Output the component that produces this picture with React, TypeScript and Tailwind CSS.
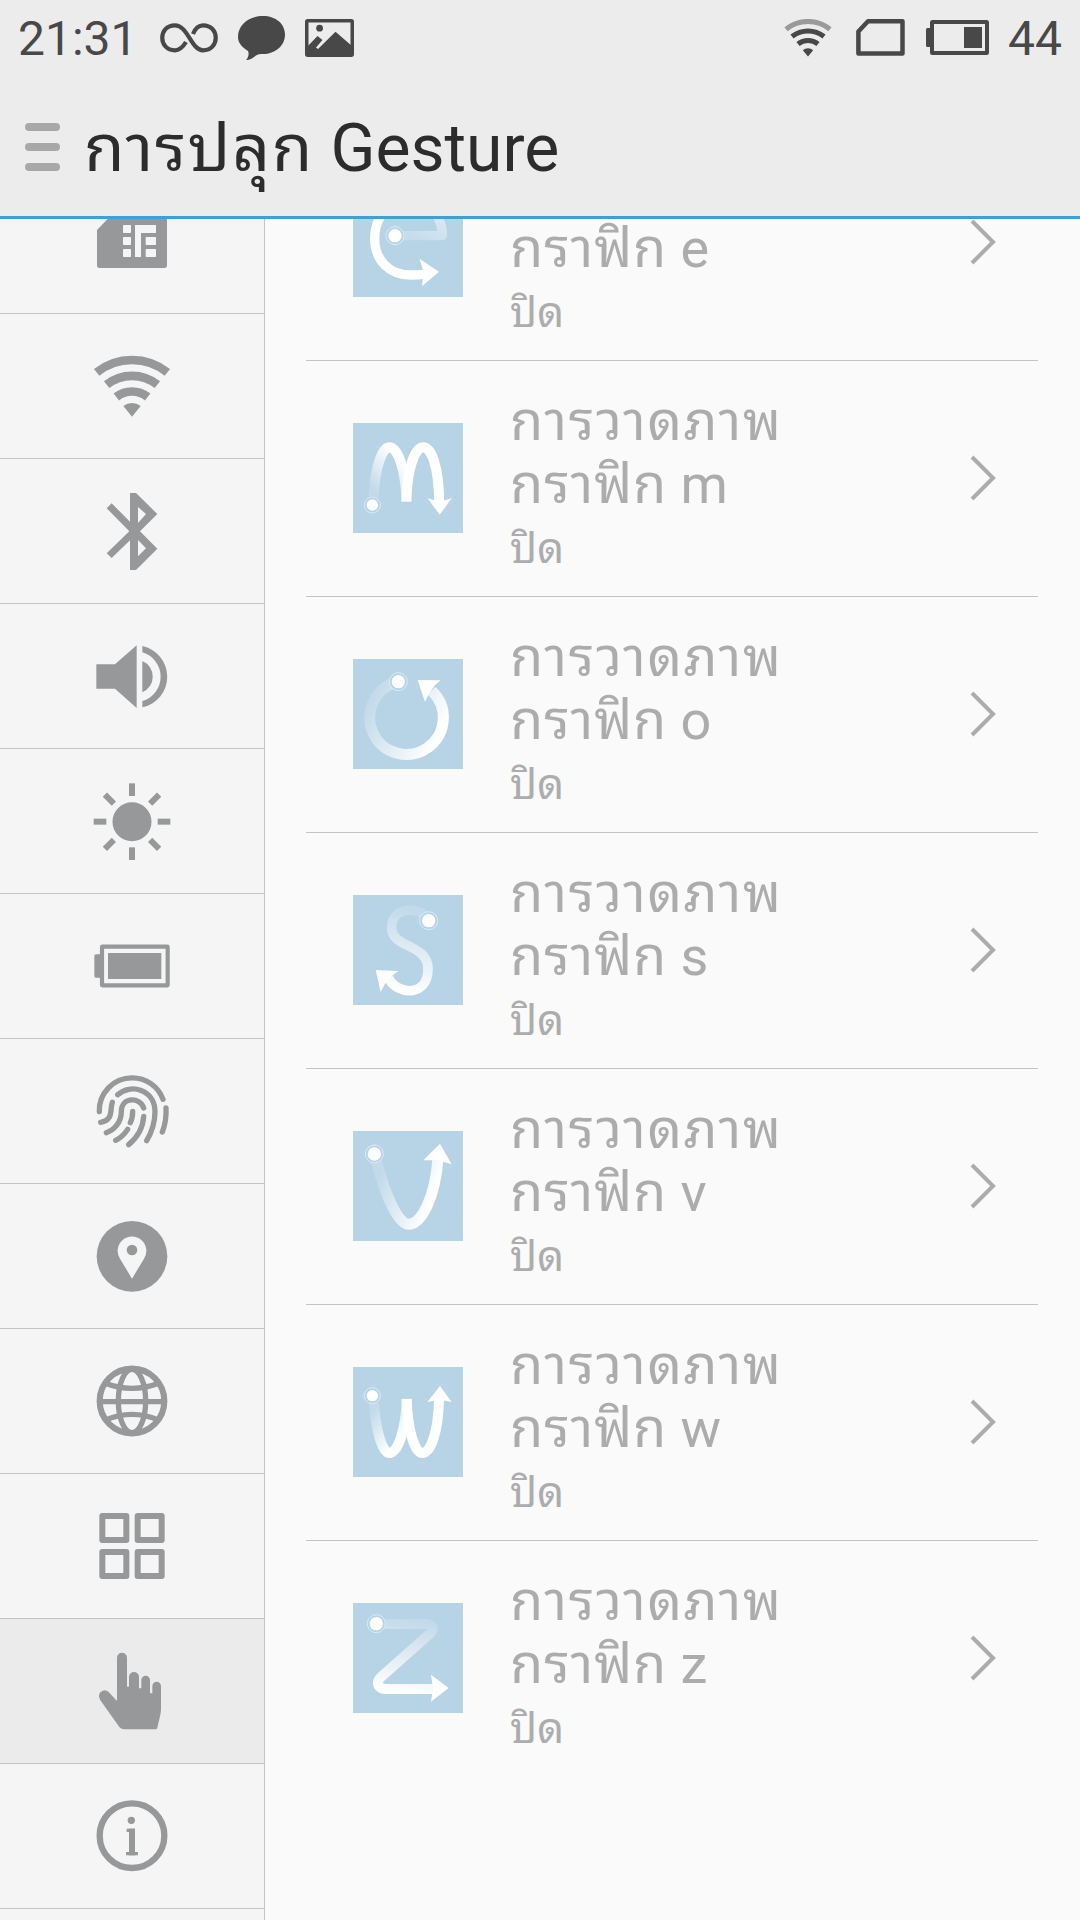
import type { ReactNode } from "react";

const fontClass = "font-['Roboto','Noto_Sans_Thai_Looped','Droid_Sans_Thai','Loma','Noto_Sans',sans-serif]";

/* Status bar icons */

function InfinityIcon() {
  return (
    <svg width="58" height="30" viewBox="0 0 58 30" fill="none" stroke="#484848" strokeWidth="4.2">
      <path d="M26 19C23 24 20 27.3 15 27.3C-2 27.3 -2 2.3 15 2.3C28 2.3 31 27.3 43 27.3C60 27.3 60 2.3 43 2.3C38 2.3 35 6 33 11" />
    </svg>
  );
}

function BubbleIcon() {
  return (
    <svg width="47" height="44" viewBox="0 0 47 44" fill="#484848">
      <path d="M25 0C38 0 47 8 47 18.5C47 30 37 38 25 38C22 38 20 38.2 18 39.5C15 42 12 44 8 44C11 41 11 37 10 35C4 31 0 27 0 21C0 9 11 0 25 0Z" />
    </svg>
  );
}

function PictureIcon() {
  return (
    <svg width="49" height="38" viewBox="0 0 49 38">
      <rect x="1.75" y="1.75" width="45.5" height="34.5" rx="1" fill="none" stroke="#484848" strokeWidth="3.5" />
      <circle cx="14.6" cy="9.2" r="3.4" fill="#484848" />
      <path d="M2 28L12.5 17L17.5 21L11 28.5L13 30L30.5 12.7L47 27V36H2Z" fill="#484848" />
    </svg>
  );
}

function StatusWifi() {
  return (
    <svg width="48" height="38" viewBox="0 0 48 38" fill="none" stroke="#484848" strokeWidth="5">
      <path d="M2 10.2A35 35 0 0 1 46 10.2" stroke="#9a9a9a" />
      <path d="M8 17.5A25.7 25.7 0 0 1 40 17.5" />
      <path d="M14 25A16 16 0 0 1 34 25" />
      <path d="M24 37.5L18.8 31.2A8 8 0 0 1 29.2 31.2Z" fill="#484848" stroke="none" />
    </svg>
  );
}

function StatusSim() {
  return (
    <svg width="49" height="37" viewBox="0 0 49 37" fill="none" stroke="#484848" strokeWidth="4.5" strokeLinejoin="round">
      <path d="M12 2.3H46.5V34.5H2.4V12.5Z" />
    </svg>
  );
}

function StatusBattery() {
  return (
    <svg width="63" height="35" viewBox="0 0 63 35" fill="#484848">
      <rect y="8" width="6" height="19" rx="1.5" />
      <rect x="6" y="2" width="55" height="31" rx="0.5" fill="none" stroke="#484848" strokeWidth="4" />
      <rect x="38" y="7" width="18" height="21" />
    </svg>
  );
}

/* Sidebar icons, all on a 240 grid */

function SideIcon({ children }: { children: ReactNode }) {
  return (
    <svg width="80" height="80" viewBox="0 0 240 240" fill="#979899">
      {children}
    </svg>
  );
}

const simIcon = (
  <>
    <path d="M15 87L67 33H217Q225 33 225 41V193Q225 201 217 201H23Q15 201 15 193Z" />
    <g fill="#f5f5f5">
      <rect x="93" y="72" width="24" height="24" rx="2" />
      <rect x="93" y="108" width="24" height="24" rx="2" />
      <rect x="93" y="144" width="24" height="24" rx="2" />
      <path d="M129 72H192V96H147V168H129Z" />
      <rect x="161" y="108" width="31" height="24" rx="2" />
      <rect x="161" y="144" width="31" height="24" rx="2" />
    </g>
  </>
);

const wifiIcon = (
  <>
    <g fill="none" stroke="#979899" strokeWidth="26">
      <path d="M14 79A170 170 0 0 1 226 79" />
      <path d="M44 116A122.5 122.5 0 0 1 196 116" />
      <path d="M73 153A75.5 75.5 0 0 1 167 153" />
    </g>
    <path d="M120 212L94 180A42 42 0 0 1 146 180Z" />
  </>
);

const bluetoothIcon = (
  <path
    fillRule="evenodd"
    d="M114 6H132L196 69L144 121L196 173L132 237H114V148L59 201L44 187L112 121L44 52L59 37L114 92ZM138 48L162 69L138 96ZM138 147L162 172L138 196Z"
  />
);

const volumeIcon = (
  <>
    <path d="M13 85H69L134 28V216L69 158H13Z" />
    <path d="M151 75A51 51 0 0 1 151 169Z" />
    <path d="M151 30A94 94 0 0 1 151 214V195A76 76 0 0 0 151 49Z" />
  </>
);

const rays = [0, 45, 90, 135, 180, 225, 270, 315];
const sunIcon = (
  <>
    <circle cx="120" cy="122" r="58.5" />
    {rays.map((deg) => (
      <rect key={deg} x="111" y="7" width="18" height="38" transform={`rotate(${deg} 120 122)`} />
    ))}
  </>
);

const batteryIcon = (
  <>
    <rect x="7" y="85" width="22" height="70" rx="5" />
    <rect x="30" y="62" width="197" height="116" rx="1" fill="none" stroke="#979899" strokeWidth="12.5" />
    <rect x="48" y="81" width="160" height="78" />
  </>
);

const fingerprintIcon = (
  <g fill="none" stroke="#979899" strokeWidth="16" strokeLinecap="round">
    <path d="M22 122A98 98 0 0 1 120 20.5A98 98 0 0 1 213 85" />
    <path d="M222 111Q224 150 211 183" />
    <path d="M77 71C115 36 189 55 189 122C189 160 178 185 164 209" />
    <path d="M155 111C145 78 88 76 88 122C88 155 65 178 43 185" />
    <path d="M122 121Q122 142 115 155" />
    <path d="M61 94C53 116 66 146 26 154" />
    <path d="M155 136C153 170 135 200 110 221" />
    <path d="M107 175Q92 198 71 208" />
  </g>
);

const locationIcon = (
  <>
    <circle cx="120" cy="121" r="106" />
    <path d="M120 188L84 128A43 43 0 1 1 156 128Z" fill="#f5f5f5" />
    <circle cx="120" cy="102" r="16" />
  </>
);

const globeIcon = (
  <g fill="none" stroke="#979899" strokeWidth="16">
    <circle cx="120" cy="120" r="97" strokeWidth="18.5" />
    <ellipse cx="120" cy="120" rx="41" ry="95" />
    <path d="M23 122H217" />
    <path d="M38 66Q120 98 202 66" />
    <path d="M38 178Q120 142 202 178" />
  </g>
);

const gridIcon = (
  <g fill="none" stroke="#979899" strokeWidth="18" strokeLinejoin="round">
    <rect x="31" y="30" width="72" height="72" />
    <rect x="137" y="30" width="72" height="72" />
    <rect x="31" y="138" width="72" height="72" />
    <rect x="137" y="138" width="72" height="72" />
  </g>
);

const handIcon = (
  <path d="M75 20a15 15 0 0 1 30 0V107H111V78a15 15 0 0 1 30 0V112H148V87a13 13 0 0 1 26 0V127H181V105a13 13 0 0 1 26 0V177Q206 190 203 200L196 230Q195 235 190 235H97Q88 235 82 228L24 146Q17 132 26 123Q38 113 50 123L75 150Z" />
);

const infoIcon = (
  <g fill="none" stroke="#979899">
    <circle cx="120" cy="119" r="97" strokeWidth="19" />
    <circle cx="118" cy="73" r="11" fill="#979899" stroke="none" />
    <path d="M120 98V178" strokeWidth="18" />
    <path d="M104 103H129M102 173H138" strokeWidth="10" />
  </g>
);

const sideItems = [
  { id: "sim", icon: simIcon },
  { id: "wifi", icon: wifiIcon },
  { id: "bluetooth", icon: bluetoothIcon },
  { id: "sound", icon: volumeIcon },
  { id: "display", icon: sunIcon },
  { id: "battery", icon: batteryIcon },
  { id: "fingerprint", icon: fingerprintIcon },
  { id: "location", icon: locationIcon },
  { id: "language", icon: globeIcon },
  { id: "apps", icon: gridIcon },
  { id: "gesture", icon: handIcon, active: true },
  { id: "about", icon: infoIcon },
];

/* Gesture tiles, 330 grid. Each stroke fades in from the start dot to the arrow. */

type Gesture = {
  letter: string;
  dot: [number, number, number];
  fade: [number, number, number, number];
  faded: string;
  solid?: string;
  width: number;
  arrow: string;
  scrolled?: boolean;
};

const gestures: Gesture[] = [
  {
    letter: "e",
    dot: [126, 146, 20],
    fade: [130, 146, 268, -100],
    faded: "M126 146H268V135C262 80 225 45 168 45",
    solid: "M168 45C95 45 65 100 65 155C65 220 110 264 172 264Q195 264 216 262",
    width: 28,
    arrow: "M200 216L258 254L207 298L212 257Z",
    scrolled: true,
  },
  {
    letter: "m",
    dot: [58, 246, 17],
    fade: [60, 200, 150, 120],
    faded: "M62 222C66 130 88 73 109 73C132 73 158 130 160 236",
    solid: "M160 236C162 130 188 73 210 73C236 73 257 130 259 240",
    width: 30,
    arrow: "M224 226L260 275L296 226L260 236Z",
  },
  {
    letter: "o",
    dot: [136, 68, 20],
    fade: [60, 100, 270, 210],
    faded: "M136 68A110.5 110.5 0 1 0 236 95",
    width: 33,
    arrow: "M194 63L263 64L244 80L226 108L216 129Z",
  },
  {
    letter: "s",
    dot: [227, 77, 20],
    fade: [200, 50, 150, 290],
    faded: "M227 77C205 32 116 32 116 98C116 160 225 145 225 222C225 304 135 304 106 248",
    width: 29,
    arrow: "M68 225L136 228L115 244L95 268L83 291Z",
  },
  {
    letter: "v",
    dot: [64, 69, 20],
    fade: [85, 110, 250, 170],
    faded: "M70 88C100 210 140 280 166 280C205 280 247 200 255 80",
    width: 33,
    arrow: "M261 38L296 100L254 88L211 88Z",
  },
  {
    letter: "w",
    dot: [58, 86, 17],
    fade: [60, 130, 150, 200],
    faded: "M63 108C68 190 88 258 109 258C135 258 158 190 161 96",
    solid: "M161 96C164 190 185 258 208 258C235 258 256 190 258 96",
    width: 30,
    arrow: "M261 57L296 105L260 98L223 105Z",
  },
  {
    letter: "z",
    dot: [70, 62, 20],
    fade: [180, 50, 140, 270],
    faded: "M70 63H220C242 63 244 79 232 91L84 222C66 240 76 258 100 258H242",
    width: 30,
    arrow: "M234 215L287 255L234 296L240 256Z",
  },
];

function GestureTile({ gesture }: { gesture: Gesture }) {
  const [cx, cy, r] = gesture.dot;
  const [x1, y1, x2, y2] = gesture.fade;
  const gradientId = `fade-${gesture.letter}`;
  return (
    <svg width="110" height="110" viewBox="0 0 330 330" className="shrink-0 bg-[#b7d3e6]">
      <defs>
        <linearGradient id={gradientId} gradientUnits="userSpaceOnUse" x1={x1} y1={y1} x2={x2} y2={y2}>
          <stop offset="0" stopColor="#fff" stopOpacity="0.15" />
          <stop offset="1" stopColor="#fff" />
        </linearGradient>
      </defs>
      <path d={gesture.faded} fill="none" stroke={`url(#${gradientId})`} strokeWidth={gesture.width} strokeLinejoin="round" />
      {gesture.solid && <path d={gesture.solid} fill="none" stroke="#fff" strokeWidth={gesture.width} />}
      <path d={gesture.arrow} fill="#fff" />
      <circle cx={cx} cy={cy} r={r + 7} fill="#b7d3e6" stroke="#dcebf5" strokeWidth="3" />
      <circle cx={cx} cy={cy} r={r} fill="#fff" />
    </svg>
  );
}

function Header() {
  return (
    <header className="relative z-10 h-[219px] border-b-[3px] border-[#409fd5] bg-[#ececec]">
      <div className="flex h-[75px] items-center justify-between pl-[18px] pr-[18px] text-[#484848]">
        <div className="flex items-center">
          <span className="w-[142px] pt-0.5 text-[48px] leading-[75px] whitespace-nowrap">21:31</span>
          <InfinityIcon />
          <span className="ml-5">
            <BubbleIcon />
          </span>
          <span className="ml-5">
            <PictureIcon />
          </span>
        </div>
        <div className="flex items-center">
          <StatusWifi />
          <span className="ml-6">
            <StatusSim />
          </span>
          <span className="ml-[21px]">
            <StatusBattery />
          </span>
          <span className="ml-[19px] pt-0.5 text-[48px] leading-[75px]">44</span>
        </div>
      </div>
      <div className="flex h-[141px] items-center pt-0.5 pl-[25px]">
        <button type="button" aria-label="Menu" className="flex flex-col gap-3">
          <span className="h-2 w-[35px] rounded-full bg-[#a8a8a8]" />
          <span className="h-2 w-[35px] rounded-full bg-[#a8a8a8]" />
          <span className="h-2 w-[35px] rounded-full bg-[#a8a8a8]" />
        </button>
        <h1 className="ml-6 pt-1 text-[66px] leading-[90px] whitespace-nowrap text-[#2c2c2c]">
          <span className="tracking-[1.7px]">การปลุก</span> Gesture
        </h1>
      </div>
    </header>
  );
}

function Sidebar() {
  return (
    <nav className="h-full w-[265px] shrink-0 overflow-hidden border-r border-[#c4c4c4] bg-[#f5f5f5]">
      <div className="-mt-[50px]">
        {sideItems.map((item) => (
          <div
            key={item.id}
            className={`flex h-[145px] items-center justify-center border-b border-[#c4c4c4] ${item.active ? "bg-[#ebebeb]" : ""}`}
          >
            <SideIcon>{item.icon}</SideIcon>
          </div>
        ))}
      </div>
    </nav>
  );
}

function GestureRow({ gesture }: { gesture: Gesture }) {
  return (
    <li className="flex h-[236px] items-start border-b border-[#c4c4c4] pt-[62px] pr-[41px] pl-[47px] last:border-b-0">
      <GestureTile gesture={gesture} />
      <div className="-mt-[33px] ml-[47px] flex-1 text-[#acacac]">
        <div className="h-[63px] text-[54px] leading-[63px] tracking-[1.7px] whitespace-nowrap">
          {!gesture.scrolled && "การวาดภาพ"}
        </div>
        <div className="text-[54px] leading-[63px] whitespace-nowrap">
          <span className="tracking-[0.9px]">กราฟิก</span> {gesture.letter}
        </div>
        <div className="pt-px text-[42px] leading-[63px]">ปิด</div>
      </div>
      <svg width="28" height="46" viewBox="0 0 28 46" className="mt-8 shrink-0" fill="none" stroke="#acacac" strokeWidth="4">
        <path d="M3 2L24 23L3 44" />
      </svg>
    </li>
  );
}

export default function App() {
  return (
    <div className={`flex h-[1920px] w-[1080px] flex-col overflow-hidden bg-[#fafafa] ${fontClass}`}>
      <Header />
      <main className="flex min-h-0 flex-1">
        <Sidebar />
        <div className="flex-1 overflow-hidden">
          <ul className="-mt-[94px] mr-[42px] ml-[41px]">
            {gestures.map((g) => (
              <GestureRow key={g.letter} gesture={g} />
            ))}
          </ul>
        </div>
      </main>
    </div>
  );
}
